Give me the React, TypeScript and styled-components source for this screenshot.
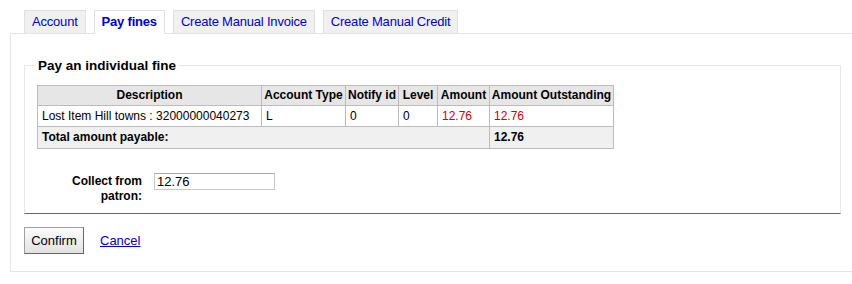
import React from "react";
import styled, { createGlobalStyle } from "styled-components";

const Global = createGlobalStyle`
  html, body { margin: 0; padding: 0; background: #fff; overflow: hidden; }
  body { font-family: "Liberation Sans", Arial, sans-serif; font-size: 12px; color: #000; }
`;

const Page = styled.div`
  padding: 10px 0 0 10px;
`;

const TabBar = styled.ul`
  display: flex;
  gap: 8px;
  list-style: none;
  margin: 0 0 0 14px;
  padding: 0;
  position: relative;
  z-index: 1;
`;

const Tab = styled.li<{ $active?: boolean }>`
  line-height: 22px;
  padding: 0 7px;
  border: 1px solid #e0e0e0;
  border-bottom: none;
  background: ${(p) => (p.$active ? "#fff" : "#f0f0f0")};
  font-size: 13px;
  letter-spacing: -0.2px;
  font-weight: ${(p) => (p.$active ? "bold" : "normal")};
  color: #0000cc;
  cursor: pointer;
  box-sizing: border-box;
  margin-bottom: ${(p) => (p.$active ? "-1px" : "0")};
  height: ${(p) => (p.$active ? "24px" : "23px")};
`;

const Panel = styled.div`
  width: 860px;
  border: 1px solid #e4e4e4;
  padding: 0 0 17px 13px;
  box-sizing: border-box;
`;

const Fieldset = styled.fieldset`
  margin: 24px 0 0 0;
  width: 817px;
  box-sizing: border-box;
  border: 1px solid #e8e8e8;
  border-bottom-color: #666;
  padding: 12px 12px 9px 12px;
  min-width: 0;
`;

const Legend = styled.legend`
  font-size: 13.5px;
  font-weight: bold;
  padding: 0 3px;
  margin-left: -2px;
`;

const Table = styled.table`
  border-collapse: collapse;
  table-layout: fixed;
  width: 577px;
  font-size: 12px;
`;

const Th = styled.th<{ $w: number }>`
  width: ${(p) => p.$w}px;
  background: #e6e6e6;
  border: 1px solid #bcbcbc;
  padding: 3px 1px;
  line-height: 13px;
  font-weight: bold;
  text-align: center;
  white-space: nowrap;
  overflow: visible;
`;

const Td = styled.td<{ $red?: boolean }>`
  border: 1px solid #bcbcbc;
  padding: 4px 4px 3px;
  line-height: 13px;
  color: ${(p) => (p.$red ? "#cc0000" : "#000")};
  white-space: nowrap;
`;

const TotalCell = styled.td`
  border: 1px solid #bcbcbc;
  padding: 4px 4px;
  line-height: 13px;
  background: #f0f0f0;
  font-weight: bold;
  white-space: nowrap;
`;

const FormRow = styled.div`
  display: flex;
  align-items: flex-start;
  margin-top: 24px;
`;

const Label = styled.label`
  width: 105px;
  margin-right: 12px;
  text-align: right;
  font-weight: bold;
  font-size: 12px;
  line-height: 15px;
  padding-top: 1px;
`;

const Input = styled.input`
  width: 121px;
  height: 17px;
  box-sizing: border-box;
  border: 1px solid #c8c8c8;
  border-top-color: #a8a8a8;
  font-family: "Liberation Sans", Arial, sans-serif;
  font-size: 13px;
  padding: 0 2px;
  outline: none;
`;

const Actions = styled.div`
  display: flex;
  align-items: center;
  gap: 16px;
  margin-top: 13px;
`;

const Button = styled.button`
  width: 60px;
  height: 27px;
  font-family: "Liberation Sans", Arial, sans-serif;
  font-size: 13px;
  color: #000;
  background: linear-gradient(#fcfcfc, #e2e2e2);
  border: 1px solid #a0a0a0;
  border-right-color: #666;
  border-bottom-color: #666;
  padding: 0;
`;

const Link = styled.a`
  font-size: 13px;
  color: #0000cc;
  text-decoration: underline;
  cursor: pointer;
`;

export default function App() {
  return (
    <Page>
      <Global />
      <TabBar>
        <Tab>Account</Tab>
        <Tab $active>Pay fines</Tab>
        <Tab>Create Manual Invoice</Tab>
        <Tab>Create Manual Credit</Tab>
      </TabBar>
      <Panel>
        <Fieldset>
          <Legend>Pay an individual fine</Legend>
          <Table>
            <thead>
              <tr>
                <Th $w={221}>Description</Th>
                <Th $w={81}>Account Type</Th>
                <Th $w={50}>Notify id</Th>
                <Th $w={36}>Level</Th>
                <Th $w={49}>Amount</Th>
                <Th $w={121}>Amount Outstanding</Th>
              </tr>
            </thead>
            <tbody>
              <tr>
                <Td>Lost Item Hill towns : 32000000040273</Td>
                <Td>L</Td>
                <Td>0</Td>
                <Td>0</Td>
                <Td $red>12.76</Td>
                <Td $red>12.76</Td>
              </tr>
              <tr>
                <TotalCell colSpan={5}>Total amount payable:</TotalCell>
                <TotalCell>12.76</TotalCell>
              </tr>
            </tbody>
          </Table>
          <FormRow>
            <Label htmlFor="collect">Collect from patron:</Label>
            <Input id="collect" defaultValue="12.76" />
          </FormRow>
        </Fieldset>
        <Actions>
          <Button>Confirm</Button>
          <Link>Cancel</Link>
        </Actions>
      </Panel>
    </Page>
  );
}
